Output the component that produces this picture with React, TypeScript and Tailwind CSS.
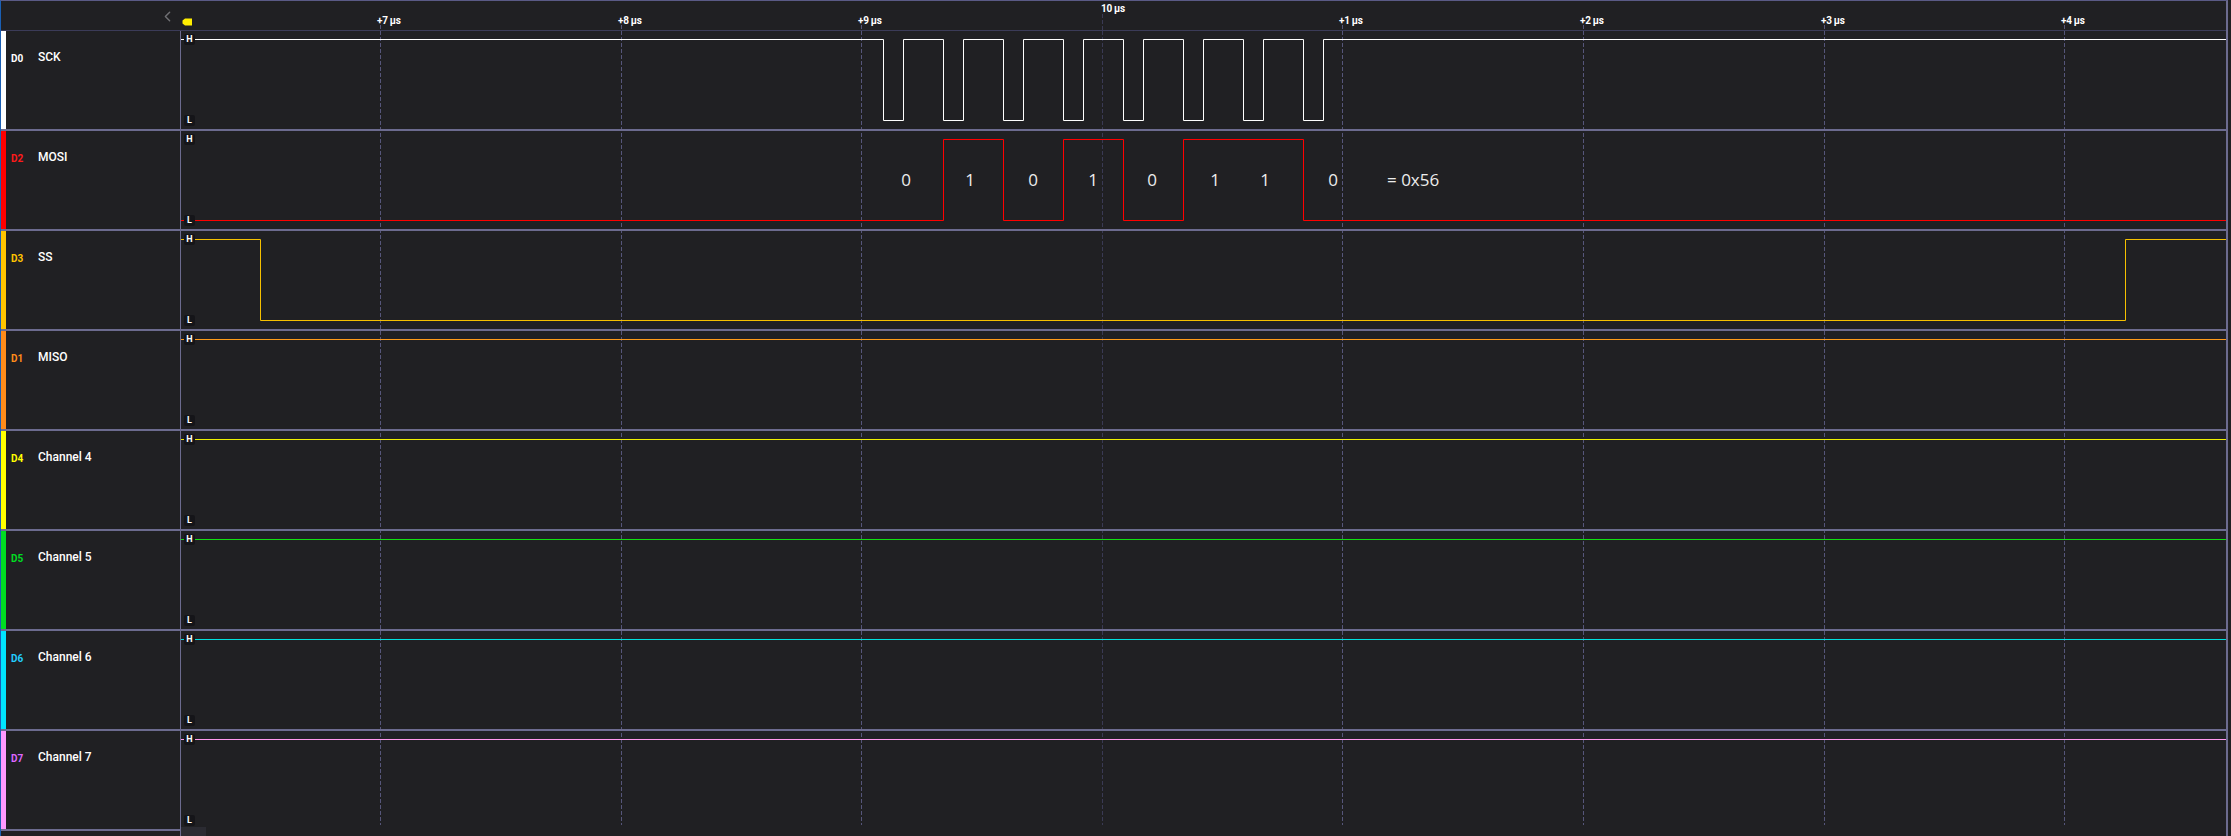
import { ChevronLeft } from "lucide-react";

type Channel = {
  id: string;
  name: string;
  bar: string;
  idText: string;
  wave: string;
  path: string;
};

const HI = 8.5;
const LO = 89.5;
const W = 2045;

// falling / rising SCK edges, relative to the waveform column
const sckPath = (() => {
  let d = `M0 ${HI}`;
  for (let k = 0; k < 8; k++) {
    const f = Math.round(701.6 + 60.1 * k) + 0.5;
    const r = Math.round(721.7 + 60.1 * k) + 0.5;
    d += ` H${f} V${LO} H${r} V${HI}`;
  }
  return d + ` H${W}`;
})();

const channels: Channel[] = [
  { id: "D0", name: "SCK", bar: "bg-white", idText: "text-white", wave: "#ffffff", path: sckPath },
  {
    id: "D2",
    name: "MOSI",
    bar: "bg-[#ff0000]",
    idText: "text-[#ff1a1a]",
    wave: "#ff0000",
    path: `M0 ${LO} H762.5 V${HI} H822.5 V${LO} H882.5 V${HI} H942.5 V${LO} H1002.5 V${HI} H1122.5 V${LO} H${W}`,
  },
  {
    id: "D3",
    name: "SS",
    bar: "bg-[#ffc400]",
    idText: "text-[#ffc400]",
    wave: "#f5c000",
    path: `M0 ${HI} H79.5 V${LO} H1944.5 V${HI} H${W}`,
  },
  { id: "D1", name: "MISO", bar: "bg-[#ff8c1a]", idText: "text-[#ff8c1a]", wave: "#ff9a1a", path: `M0 ${HI} H${W}` },
  { id: "D4", name: "Channel 4", bar: "bg-[#ffff00]", idText: "text-[#ffff00]", wave: "#eeee00", path: `M0 ${HI} H${W}` },
  { id: "D5", name: "Channel 5", bar: "bg-[#00dd22]", idText: "text-[#00dd22]", wave: "#11e011", path: `M0 ${HI} H${W}` },
  { id: "D6", name: "Channel 6", bar: "bg-[#00e5ff]", idText: "text-[#22ccff]", wave: "#00e0e0", path: `M0 ${HI} H${W}` },
  { id: "D7", name: "Channel 7", bar: "bg-[#ff99ff]", idText: "text-[#dd66ff]", wave: "#ff99ee", path: `M0 ${HI} H${W}` },
];

const ticks = [
  { x: 199, label: "+7 µs" },
  { x: 440, label: "+8 µs" },
  { x: 680, label: "+9 µs" },
  { x: 921, label: "10 µs", center: true },
  { x: 1161, label: "+1 µs" },
  { x: 1402, label: "+2 µs" },
  { x: 1643, label: "+3 µs" },
  { x: 1883, label: "+4 µs" },
];

const bits = [
  { x: 725, v: "0" },
  { x: 789, v: "1" },
  { x: 852, v: "0" },
  { x: 912, v: "1" },
  { x: 971, v: "0" },
  { x: 1034, v: "1" },
  { x: 1084, v: "1" },
  { x: 1152, v: "0" },
];

function LevelBadge({ text, className }: { text: string; className: string }) {
  return (
    <span
      className={`absolute left-[3px] flex h-[11px] w-[11px] items-center justify-center rounded-[2px] bg-[#151519] text-[9px] leading-none font-bold text-white ${className}`}
    >
      {text}
    </span>
  );
}

export default function App() {
  return (
    <div className="h-[836px] w-[2231px] overflow-hidden bg-[#202023] font-['Roboto',sans-serif]">
      <div className="flex h-full w-[2228px] flex-col border-t border-r-2 border-l border-t-[#5a5a86] border-r-[#6c6b8f] border-l-[#1a5fb4]">
        {/* time axis */}
        <div className="flex h-[30px] shrink-0 border-b border-[#3b3b58]">
          <div className="flex w-[180px] items-start justify-end pt-[7px] pr-[5px]">
            <ChevronLeft size={17} strokeWidth={2} className="text-[#707074]" />
          </div>
          <div className="relative flex-1">
            <svg width="10" height="8" viewBox="0 0 10 8" className="absolute top-[17px] left-[1px]">
              <path d="M3 0.5 H10 V7.5 H3 L0.5 5.5 V2.5 Z" fill="#ffee00" />
            </svg>
            <svg width={W} height="30" className="absolute inset-0">
              {ticks.map((t) => (
                <line
                  key={t.label}
                  x1={t.x + 0.5}
                  x2={t.x + 0.5}
                  y1={t.center ? 13 : 24}
                  y2={30}
                  stroke={t.center ? "#3a3a54" : "#56567a"}
                  strokeDasharray="4 2"
                />
              ))}
            </svg>
            {ticks.map((t) => (
              <span
                key={t.label}
                className={`absolute text-[10px] leading-[10px] font-bold tracking-[-0.3px] text-white ${
                  t.center ? "top-[3px]" : "top-[15px]"
                }`}
                style={{ left: t.x - (t.center ? 1 : 3) }}
              >
                {t.label}
              </span>
            ))}
          </div>
        </div>

        <div className="flex flex-1">
          {/* channel labels */}
          <div className="w-[180px] shrink-0 border-r border-[#6c6b8f]">
            {channels.map((c) => (
              <div key={c.id} className="flex h-[100px] border-b-2 border-[#6c6b8f]">
                <div className={`w-[5px] ${c.bar}`} />
                <div className="flex items-center self-start pt-[17px] pl-[5px]">
                  <span className={`mt-[4px] w-[27px] text-[10px] leading-[14px] font-bold ${c.idText}`}>{c.id}</span>
                  <span className="text-[12px] leading-[14px] font-medium text-white">{c.name}</span>
                </div>
              </div>
            ))}
          </div>

          {/* waveforms */}
          <div className="relative flex-1">
            <svg width={W} height="800" className="absolute top-0 left-0">
              {ticks.map((t) => (
                <line
                  key={t.label}
                  x1={t.x + 0.5}
                  x2={t.x + 0.5}
                  y1={0}
                  y2={794}
                  stroke={t.center ? "#3a3a54" : "#56567a"}
                  strokeDasharray="4 2"
                />
              ))}
            </svg>
            {channels.map((c, i) => (
              <div
                key={c.id}
                className={`relative h-[100px] ${i < channels.length - 1 ? "border-b-2 border-[#6c6b8f]" : ""}`}
              >
                <svg width={W} height="98" className="absolute top-0 left-0">
                  <path d={c.path} fill="none" stroke={c.wave} strokeWidth="1" />
                  {c.id === "D2" && (
                    <g fill="#ececec" fontFamily="'Open Sans', sans-serif" fontSize="17">
                      {bits.map((b, j) => (
                        <text key={j} x={b.x} y={55} textAnchor="middle">
                          {b.v}
                        </text>
                      ))}
                      <text x={1206} y={55}>
                        = 0x56
                      </text>
                    </g>
                  )}
                </svg>
                <LevelBadge text="H" className="top-[3px]" />
                <LevelBadge text="L" className="top-[84px]" />
              </div>
            ))}
            <div className="absolute bottom-0 left-0 h-[9px] w-[25px] bg-[#2b2b32]" />
          </div>
        </div>
      </div>
    </div>
  );
}
